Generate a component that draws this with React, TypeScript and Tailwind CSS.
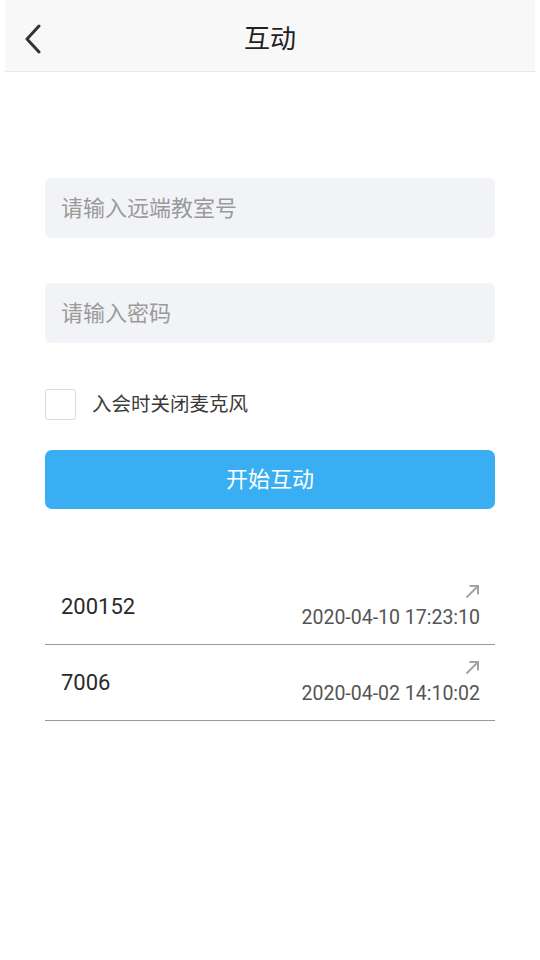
import { useState } from 'react';

const history = [
  { room: '200152', time: '2020-04-10 17:23:10' },
  { room: '7006', time: '2020-04-02 14:10:02' },
];

function ArrowUpRight() {
  return (
    <svg className="h-[15px] w-[15px] text-[#a3a3a3]" viewBox="0 0 15 15" fill="none" stroke="currentColor" strokeWidth={2}>
      <path d="M1.5 13.5L13 2" />
      <path d="M4.5 2H13v8.5" />
    </svg>
  );
}

export default function App() {
  const [muted, setMuted] = useState(false);

  return (
    <div
      className="min-h-screen w-[540px] bg-white"
      style={{ fontFamily: 'Roboto, "Noto Sans CJK SC", sans-serif' }}
    >
      <header className="relative mx-[5px] flex h-[72px] items-center border-b border-[#e8e8e8] bg-[#f8f8f8] pt-[7px]">
        <button className="ml-[8px] flex h-10 w-10 items-center justify-center">
          <svg className="h-[30px] w-[20px] text-[#333]" viewBox="0 0 20 30" fill="none" stroke="currentColor" strokeWidth={3} strokeLinecap="round" strokeLinejoin="round">
            <path d="M16 2L4 15l12 13" />
          </svg>
        </button>
        <h1 className="absolute left-1/2 -translate-x-1/2 text-[26px] text-[#222]">互动</h1>
      </header>

      <div className="px-[45px] pt-[106px]">
        <input
          className="block h-[60px] w-full rounded-[6px] bg-[#f2f3f7] px-[16px] text-[22px] text-[#333] outline-none placeholder:text-[#9a9a9a]"
          placeholder="请输入远端教室号"
        />
        <input
          type="password"
          className="mt-[45px] block h-[60px] w-full rounded-[6px] bg-[#f2f3f7] px-[16px] text-[22px] text-[#333] outline-none placeholder:text-[#9a9a9a]"
          placeholder="请输入密码"
        />

        <label className="mt-[46px] flex items-center gap-[16px]">
          <span
            onClick={() => setMuted(!muted)}
            className="flex h-[31px] w-[31px] items-center justify-center rounded-[3px] border border-[#dcdcdc] bg-white"
          >
            {muted && <span className="text-[18px] text-[#3aaef1]">✓</span>}
          </span>
          <span className="text-[19.5px] text-[#3a3a3a]">入会时关闭麦克风</span>
        </label>

        <button className="mt-[30px] flex h-[59px] w-full items-center justify-center rounded-[7px] bg-[#3aaef2] text-[22px] text-white">
          开始互动
        </button>

        <ul className="mt-[60px]">
          {history.map((item) => (
            <li key={item.room} className="flex h-[76px] items-center justify-between border-b-[1.5px] border-[#999] pl-[16px] pr-[15px]">
              <span className="text-[22px] text-[#2a2a2a]">{item.room}</span>
              <div className="flex h-full flex-col items-end pt-[15px]">
                <ArrowUpRight />
                <span className="mt-[8px] text-[19.5px] leading-[22px] text-[#555]">{item.time}</span>
              </div>
            </li>
          ))}
        </ul>
      </div>
    </div>
  );
}
